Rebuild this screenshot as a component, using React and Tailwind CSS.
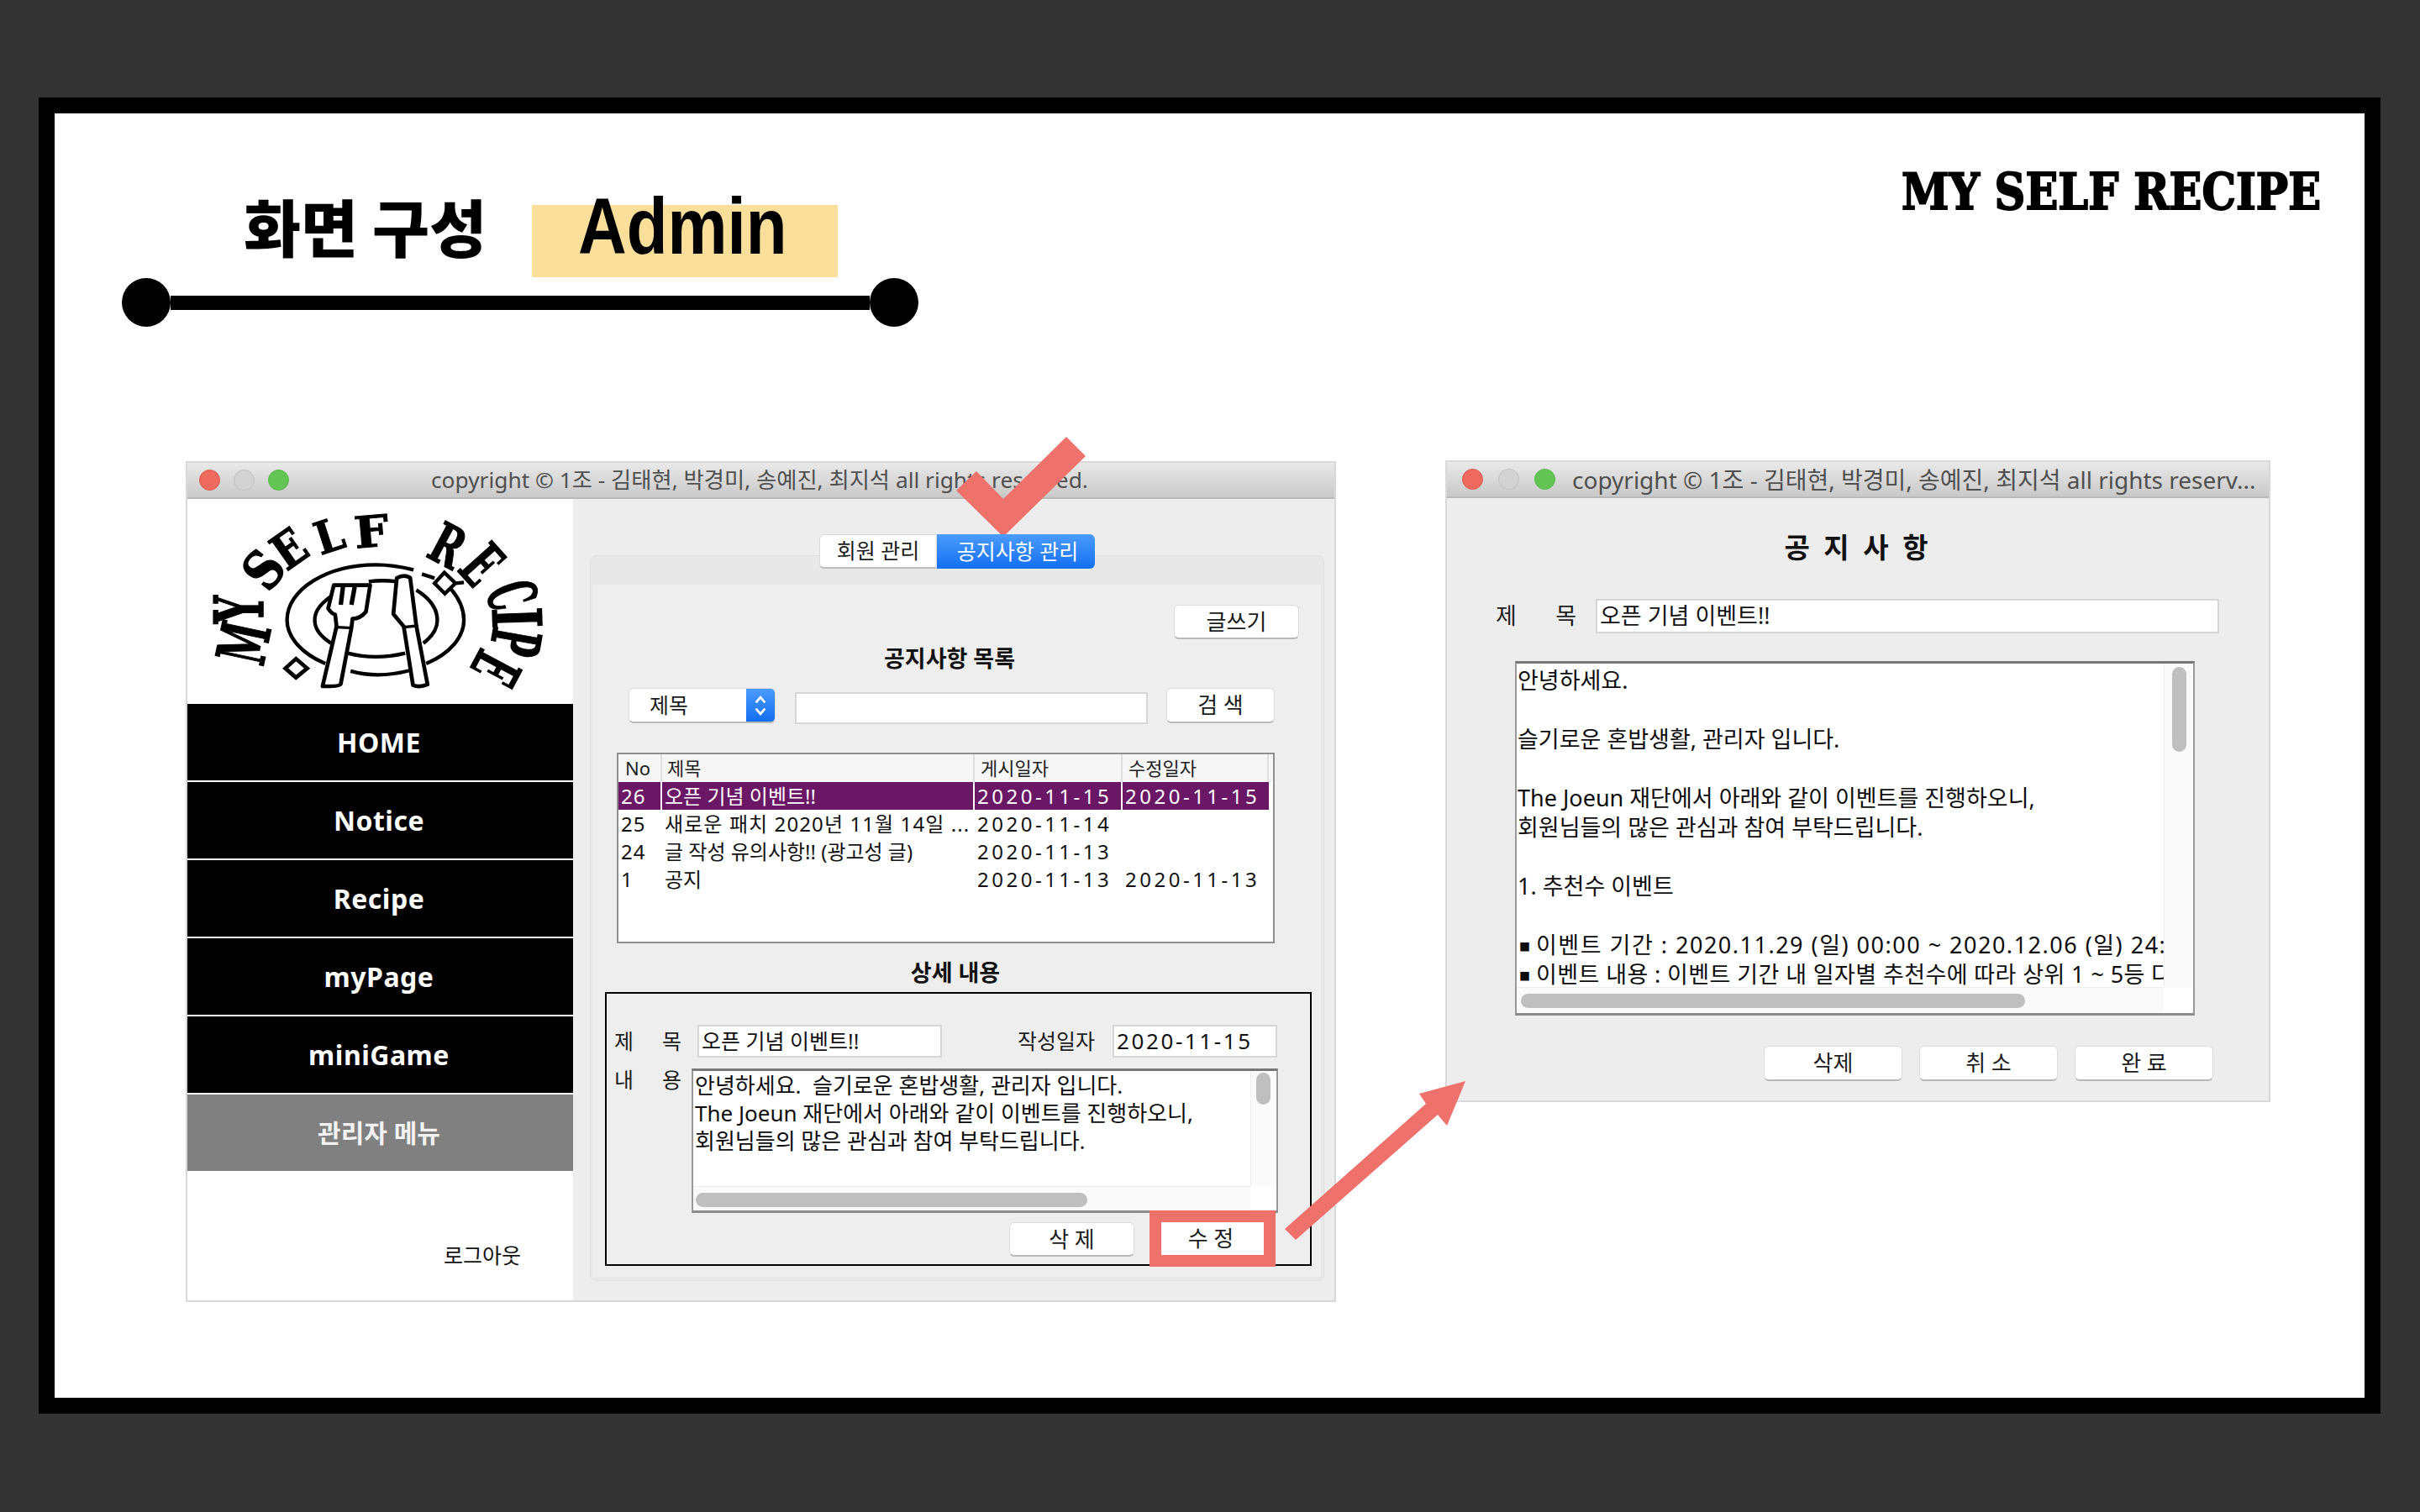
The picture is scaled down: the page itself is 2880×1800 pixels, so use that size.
import React from 'react';

const NAV = ['HOME', 'Notice', 'Recipe', 'myPage', 'miniGame'];

const ROWS = [
  { no: '26', title: '오픈 기념 이벤트!!', posted: '2020-11-15', edited: '2020-11-15', selected: true },
  { no: '25', title: '새로운 패치 2020년 11월 14일 ...', posted: '2020-11-14', edited: '', wide: true },
  { no: '24', title: '글 작성 유의사항!! (광고성 글)', posted: '2020-11-13', edited: '' },
  { no: '1', title: '공지', posted: '2020-11-13', edited: '2020-11-13' },
];

const LOGO_LETTERS = [
  { ch: 'M', x: 250, y: 672, r: -78, sx: 1.3, sy: 2.4 },
  { ch: 'Y', x: 234, y: 552, r: -90, sx: 1.4, sy: 2.4 },
  { ch: 'S', x: 318, y: 412, r: -52, sx: 1.6, sy: 1.9 },
  { ch: 'E', x: 408, y: 338, r: -35, sx: 1.45, sy: 1.75 },
  { ch: 'L', x: 550, y: 292, r: -18, sx: 1.45, sy: 1.6 },
  { ch: 'F', x: 700, y: 277, r: -5, sx: 1.75, sy: 1.55 },
  { ch: 'R', x: 970, y: 328, r: 28, sx: 1.35, sy: 2 },
  { ch: 'E', x: 1090, y: 395, r: 48, sx: 1.25, sy: 2.25 },
  { ch: 'C', x: 1195, y: 502, r: 72, sx: 1.1, sy: 2.4 },
  { ch: 'I', x: 1212, y: 582, r: 88, sx: 1.6, sy: 2.4 },
  { ch: 'P', x: 1208, y: 668, r: 100, sx: 1.25, sy: 2.4 },
  { ch: 'E', x: 1138, y: 760, r: 118, sx: 1.2, sy: 2.3 },
];

const TrafficLights = ({ gaps }) => (
  <div className={`flex items-center ${gaps}`}>
    <span className="w-[25px] h-[25px] rounded-full bg-[#ee6a5f] border border-[#e2574c]" />
    <span className="w-[25px] h-[25px] rounded-full bg-[#d3d3d3] border border-[#c2c2c2]" />
    <span className="w-[25px] h-[25px] rounded-full bg-[#62c554] border border-[#58b84b]" />
  </div>
);

const AquaButton = ({ className = '', children }) => (
  <button className={`flex items-center justify-center bg-white rounded-md border border-[#dcdcdc] border-b-2 border-b-[#b8b8b8] text-[26px] text-[#1c1c1c] ${className}`}>
    {children}
  </button>
);

const Field = ({ className = '', children }) => (
  <div className={`flex items-center bg-white border-2 border-[#d6d6d6] pl-[3px] text-[#111] whitespace-nowrap ${className}`}>
    {children}
  </div>
);

// text area with the fake mac scroll bars
const ScrollBox = ({ className, cols, rows, vThumb, hThumb, children }) => (
  <div className={`grid ${cols} ${rows} bg-white border-2 border-[#999] border-t-[3px] border-t-[#777] border-b-[3px] border-b-[#8c8c8c] ${className}`}>
    <div className="overflow-hidden whitespace-nowrap text-[#0c0c0c]">{children}</div>
    <div className="bg-[#fafafa] border-l border-[#ededed]">{vThumb}</div>
    <div className="bg-[#fafafa] border-t border-[#ededed]">{hThumb}</div>
    <div className="bg-white" />
  </div>
);

const MacWindow = ({ className, lightsClass, gaps, titleClass, title, children }) => (
  <div className={`absolute flex flex-col border-2 border-[#d9d9d9] ${className}`}>
    <div className={`flex items-center h-[43px] shrink-0 bg-gradient-to-b from-[#e9e9e9] to-[#c9c9c9] border-b-2 border-[#b9b9b9] ${lightsClass}`}>
      <TrafficLights gaps={gaps} />
      <div className={`text-[#4f4f4f] whitespace-nowrap ${titleClass}`}>{title}</div>
    </div>
    {children}
  </div>
);

const Logo = () => (
  <svg viewBox="42 157 1378 732" className="w-[459px] h-[244px] block">
    {LOGO_LETTERS.map((l, i) => (
      <text
        key={i}
        transform={`translate(${l.x} ${l.y}) rotate(${l.r}) scale(${l.sx} ${l.sy})`}
        textAnchor="middle"
        y="33"
        fontSize="100"
        fontWeight="700"
        fontFamily="'DejaVu Serif', serif"
        fill="#000"
        stroke="#000"
        strokeWidth="2"
      >
        {l.ch}
      </text>
    ))}
    {/* plate */}
    <path d="M850 410 C790 395 740 392 716 392 C540 392 398 480 398 590 C398 650 450 710 535 745" fill="none" stroke="#000" strokeWidth="13" />
    <path d="M895 745 C980 710 1030 650 1030 590 C1030 545 1010 510 985 480" fill="none" stroke="#000" strokeWidth="13" />
    <path d="M555 505 C520 530 497 555 497 590 C497 620 520 650 555 672" fill="none" stroke="#000" strokeWidth="13" />
    <path d="M690 452 C720 448 760 448 790 452" fill="none" stroke="#000" strokeWidth="13" />
    <path d="M860 482 C905 510 935 545 935 590 C935 620 915 650 885 672" fill="none" stroke="#000" strokeWidth="13" />
    <path d="M615 708 C680 725 750 725 820 708 M625 772 C690 790 760 790 835 770" fill="none" stroke="#000" strokeWidth="13" />
    {/* fork */}
    <path d="M565 465 L695 465 L680 560 Q660 585 632 585 L628 618 L590 818 Q585 828 525 826 L575 612 L570 570 Q555 565 545 548 Z" fill="#fff" stroke="#000" strokeWidth="14" strokeLinejoin="round" />
    <path d="M598 470 L590 535 M640 470 L628 535" fill="none" stroke="#000" strokeWidth="16" />
    <path d="M575 615 L632 618" fill="none" stroke="#000" strokeWidth="10" />
    {/* knife */}
    <path d="M790 440 Q815 425 838 438 L860 610 L900 820 Q870 832 848 822 L815 612 L778 568 Z" fill="#fff" stroke="#000" strokeWidth="14" strokeLinejoin="round" />
    <path d="M815 615 L862 610" fill="none" stroke="#000" strokeWidth="10" />
    {/* sparkles */}
    <path d="M960 420 L1000 458 L962 495 L925 458 Z M880 425 L925 440 M1000 458 L1030 455" fill="#fff" stroke="#000" strokeWidth="13" />
    <path d="M430 728 L470 762 L430 795 L392 762 Z" fill="#fff" stroke="#000" strokeWidth="14" />
  </svg>
);

const LeftWindow = () => (
  <MacWindow
    className="left-[156px] top-[414px] w-[1369px] h-[1001px]"
    lightsClass="pl-[14px]"
    gaps="gap-[16px]"
    titleClass="ml-[169px] text-[26.3px]"
    title="copyright © 1조 - 김태현, 박경미, 송예진, 최지석 all rights reserved."
  >
    <div className="flex flex-1 min-h-0">
      {/* sidebar */}
      <div className="w-[459px] shrink-0 flex flex-col bg-white">
        <Logo />
        <div className="flex flex-col gap-[2px]">
          {NAV.map((item) => (
            <div key={item} className="h-[91px] flex items-center justify-center pr-[3px] bg-black text-white font-bold text-[32px] tracking-[0.5px]">
              {item}
            </div>
          ))}
          <div className="h-[91px] flex items-center justify-center pr-[3px] bg-[#808080] text-[#f2f2f2] font-bold text-[30px]">
            관리자 메뉴
          </div>
        </div>
        <div className="mt-[82px] ml-[305px] text-[25px] text-[#111]">로그아웃</div>
      </div>

      {/* content */}
      <div className="flex-1 bg-[#ededed] pl-[20px] pt-[42px]">
        <div className="relative z-10 flex w-[328px] h-[41px] mx-auto -mb-4 -translate-x-[6px] text-[25px]">
          <div className="w-[140px] flex items-center justify-center bg-white border border-[#d8d8d8] border-b-2 border-b-[#bdbdbd] rounded-l-md text-[#1c1c1c]">회원 관리</div>
          <div className="flex-1 flex items-center justify-center pl-[4px] bg-gradient-to-b from-[#4a9bfb] to-[#0f6ef2] rounded-r-md text-white">공지사항 관리</div>
        </div>
        <div className="w-[874px] h-[864px] bg-[#e8e8e8] border border-[#dfdfdf] rounded-lg pt-[34px] px-[3px]">
          <div className="bg-[#eeeeee] h-[824px]">
            <div className="flex justify-end pt-[24px] pr-[26px]">
              <AquaButton className="w-[149px] h-[41px]">글쓰기</AquaButton>
            </div>
            <div className="mt-[6px] h-[34px] pr-[18px] flex items-center justify-center text-[27px] font-bold text-[#111]">공지사항 목록</div>

            <div className="mt-[18px] pl-[42px] flex items-start h-[43px]">
              <div className="flex w-[175px] h-[42px] rounded-md overflow-hidden bg-white border border-[#dcdcdc] border-b-2 border-b-[#b8b8b8]">
                <div className="flex-1 pl-[24px] flex items-center text-[25px] text-[#1c1c1c]">제목</div>
                <div className="w-[34px] bg-gradient-to-b from-[#4a9bfb] to-[#0f6ef2] flex items-center justify-center">
                  <svg viewBox="0 0 20 32" className="w-[18px] h-[30px]" fill="none" stroke="#fff" strokeWidth="3">
                    <path d="M4 12 L10 5 L16 12 M4 20 L10 27 L16 20" />
                  </svg>
                </div>
              </div>
              <div className="w-[420px] h-[38px] mt-[5px] ml-[23px] bg-white border-2 border-[#d6d6d6]" />
              <AquaButton className="w-[129px] h-[42px] ml-[22px]">검 색</AquaButton>
            </div>

            {/* notice table */}
            <div className="mt-[34px] ml-[28px] w-[783px] h-[227px] bg-white border-2 border-[#8f8f8f]">
              <div className="flex h-[33px] bg-[#f6f6f6] text-[22px] text-[#222] items-center">
                <div className="w-[52px] pl-[8px] border-r-2 border-[#dedede]">No</div>
                <div className="w-[372px] pl-[6px] border-r-2 border-[#dedede]">제목</div>
                <div className="w-[176px] pl-[7px] border-r-2 border-[#dedede]">게시일자</div>
                <div className="w-[174px] pl-[7px] border-r-2 border-[#dedede]">수정일자</div>
              </div>
              {ROWS.map((row) => (
                <div
                  key={row.no}
                  className={`flex h-[33px] items-center text-[24px] whitespace-nowrap w-[774px] ${row.selected ? 'bg-[#6a1766] text-white' : 'text-[#111]'}`}
                >
                  <div className={`w-[52px] h-full flex items-center pl-[3px] tracking-[1px] ${row.selected ? 'border-r-2 border-white' : ''}`}>{row.no}</div>
                  <div className={`w-[372px] h-full flex items-center pl-[3px] ${row.wide ? 'tracking-[1.1px]' : ''} ${row.selected ? 'border-r-2 border-white' : ''}`}>{row.title}</div>
                  <div className={`w-[176px] h-full flex items-center pl-[3px] tracking-[3.5px] ${row.selected ? 'border-r-2 border-white' : ''}`}>{row.posted}</div>
                  <div className="flex-1 h-full flex items-center pl-[3px] tracking-[3.5px]">{row.edited}</div>
                </div>
              ))}
            </div>

            <div className="mt-[18px] h-[34px] pr-[4px] flex items-center justify-center text-[27px] font-bold text-[#111]">상세 내용</div>

            {/* detail box */}
            <div className="mt-[6px] ml-[14px] w-[841px] h-[326px] border-2 border-black pt-[37px] pl-[9px] text-[25px] text-[#1c1c1c]">
              <div className="flex items-center h-[39px]">
                <div className="w-[80px] flex justify-between"><span>제</span><span>목</span></div>
                <Field className="ml-[19px] w-[291px] h-[39px]">오픈 기념 이벤트!!</Field>
                <div className="ml-[90px] w-[91px] whitespace-nowrap">작성일자</div>
                <Field className="ml-[22px] w-[196px] h-[39px] tracking-[2.6px] text-[26px]">2020-11-15</Field>
              </div>
              <div className="flex items-start mt-[13px]">
                <div className="w-[80px] flex justify-between -mt-[5px]"><span>내</span><span>용</span></div>
                <ScrollBox
                  className="ml-[12px] w-[698px] h-[172px] leading-[33px] text-[26px]"
                  cols="grid-cols-[1fr_31px]"
                  rows="grid-rows-[1fr_29px]"
                  vThumb={<div className="mt-[2px] ml-[6px] w-[17px] h-[38px] rounded-full bg-[#bfbfbf]" />}
                  hThumb={<div className="mt-[7px] ml-[3px] w-[466px] h-[17px] rounded-full bg-[#bfbfbf]" />}
                >
                  <div className="pl-[2px] pt-[1px]">
                    <div>안녕하세요.&nbsp; 슬기로운 혼밥생활, 관리자 입니다.</div>
                    <div>The Joeun 재단에서 아래와 같이 이벤트를 진행하오니,</div>
                    <div>회원님들의 많은 관심과 참여 부탁드립니다.</div>
                  </div>
                </ScrollBox>
              </div>
              <div className="flex items-start mt-[11px] ml-[470px]">
                <AquaButton className="w-[149px] h-[41px]">삭 제</AquaButton>
                <div className="ml-[18px] -mt-[14px] w-[150px] h-[67px] border-[14px] border-[#ee716c] bg-white flex items-center justify-center pr-[4px] text-[26px]">수 정</div>
              </div>
            </div>
          </div>
        </div>
      </div>
    </div>
  </MacWindow>
);

const RightWindow = () => (
  <MacWindow
    className="left-[1655px] top-[413px] w-[982px] h-[764px]"
    lightsClass="pl-[18px]"
    gaps="gap-[18px]"
    titleClass="ml-[20px] text-[28px]"
    title="copyright © 1조 - 김태현, 박경미, 송예진, 최지석 all rights reserv..."
  >
    <div className="flex-1 bg-[#ededed] text-[27px] text-[#1c1c1c]">
      <div className="mt-[39px] h-[40px] flex items-center justify-center text-[33px] font-bold text-[#111] tracking-[4px]">공 지 사 항</div>
      <div className="mt-[41px] ml-[58px] flex items-center h-[41px]">
        <div className="w-[96px] flex justify-between"><span>제</span><span>목</span></div>
        <Field className="ml-[23px] w-[742px] h-[41px]">오픈 기념 이벤트!!</Field>
      </div>
      <ScrollBox
        className="mt-[33px] ml-[81px] w-[809px] h-[422px] leading-[35px]"
        cols="grid-cols-[1fr_35px]"
        rows="grid-rows-[1fr_31px]"
        vThumb={<div className="mt-[4px] ml-[9px] w-[17px] h-[101px] rounded-full bg-[#bfbfbf]" />}
        hThumb={<div className="mt-[7px] ml-[5px] w-[600px] h-[17px] rounded-full bg-[#bfbfbf]" />}
      >
        <div className="pl-[1px] pt-[2px]">
          <div>안녕하세요.</div>
          <div>&nbsp;</div>
          <div>슬기로운 혼밥생활, 관리자 입니다.</div>
          <div>&nbsp;</div>
          <div>The Joeun 재단에서 아래와 같이 이벤트를 진행하오니,</div>
          <div>회원님들의 많은 관심과 참여 부탁드립니다.</div>
          <div>&nbsp;</div>
          <div>1. 추천수 이벤트</div>
          <div>&nbsp;</div>
          <div className="h-[35px] tracking-[1.5px]"><span className="inline-block w-[22px] pl-[2px] text-[13px] leading-none align-middle">■</span>이벤트 기간 : 2020.11.29 (일) 00:00 ~ 2020.12.06 (일) 24:00</div>
          <div className="h-[35px] tracking-[0.4px]"><span className="inline-block w-[22px] pl-[2px] text-[13px] leading-none align-middle">■</span>이벤트 내용 : 이벤트 기간 내 일자별 추천수에 따라 상위 1 ~ 5등 다</div>
        </div>
      </ScrollBox>
      <div className="mt-[36px] mr-[66px] flex justify-end gap-[20px]">
        <AquaButton className="w-[165px] h-[42px]">삭제</AquaButton>
        <AquaButton className="w-[165px] h-[42px]">취 소</AquaButton>
        <AquaButton className="w-[165px] h-[42px]">완 료</AquaButton>
      </div>
    </div>
  </MacWindow>
);

export default function App() {
  return (
    <div className="w-[2880px] h-[1800px] bg-[#333333] pl-[46px] pt-[116px] overflow-hidden [font-family:'Noto_Sans','Noto_Sans_CJK_KR',sans-serif]">
      <div className="relative w-[2787px] h-[1567px] border-[19px] border-black bg-white">
        {/* slide heading */}
        <div className="absolute left-[225px] top-[83px] text-[74px] leading-[100px] font-black text-black whitespace-nowrap [font-family:'Noto_Sans_CJK_KR',sans-serif]">화면 구성</div>
        <div className="absolute left-[568px] top-[109px] w-[364px] h-[86px] bg-[#fadf9b]" />
        <div className="absolute left-[623px] top-[75px] text-[94px] leading-[120px] font-bold text-black scale-x-[.85] origin-left [font-family:'Liberation_Sans',sans-serif]">Admin</div>
        <div className="absolute left-[80px] top-[196px] flex items-center w-[948px]">
          <span className="w-[58px] h-[58px] rounded-full bg-black shrink-0" />
          <span className="flex-1 h-[17px] bg-black" />
          <span className="w-[58px] h-[58px] rounded-full bg-black shrink-0" />
        </div>
        <div className="absolute left-[2198px] top-[53px] text-[60px] leading-[80px] font-bold text-black whitespace-nowrap scale-x-[.85] origin-left [-webkit-text-stroke:2px_black] [font-family:'DejaVu_Serif',serif]">MY SELF RECIPE</div>

        <LeftWindow />
        <RightWindow />

        {/* red annotations */}
        <svg className="absolute left-0 top-0 w-[2749px] h-[1529px] pointer-events-none" viewBox="65 135 2749 1529" fill="#ee716c">
          <polygon points="1269,520 1292,543 1194,639 1138,584 1162,561 1194,594" />
          <polygon points="1529,1463 1542,1476 1711,1327 1722,1340 1744,1287 1689,1302 1697,1314" />
        </svg>
      </div>
    </div>
  );
}
